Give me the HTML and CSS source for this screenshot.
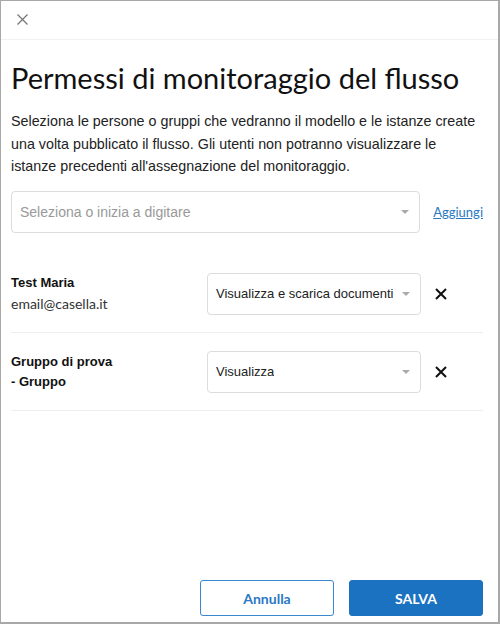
FILE: index.html
```html
<!DOCTYPE html>
<html lang="it">
<head>
    <meta charset="UTF-8">
    <meta name="viewport" content="width=device-width, initial-scale=1.0">
    <title>Permessi di monitoraggio del flusso</title>
    <link rel="stylesheet" href="styles.css">
</head>
<body>
    <div class="dialog">
        <!-- barra superiore con chiusura -->
        <div class="dialog-header">
            <button class="close-btn" aria-label="Chiudi">
                <svg width="11" height="11" viewBox="0 0 11 11"><path d="M0.5 0.5L10.5 10.5M10.5 0.5L0.5 10.5" stroke="#777" stroke-width="1.3" fill="none"/></svg>
            </button>
        </div>

        <div class="dialog-body">
            <h1>Permessi di monitoraggio del flusso</h1>
            <p class="intro">Seleziona le persone o gruppi che vedranno il modello e le istanze create una volta pubblicato il flusso. Gli utenti non potranno visualizzare le istanze precedenti all'assegnazione del monitoraggio.</p>

            <div class="add-row">
                <div class="select select-wide">
                    <span class="placeholder">Seleziona o inizia a digitare</span>
                    <span class="caret"></span>
                </div>
                <a href="#" class="add-link">Aggiungi</a>
            </div>

            <div class="member">
                <div class="member-info">
                    <div class="member-name">Test Maria</div>
                    <div class="member-mail">email@casella.it</div>
                </div>
                <div class="select select-role">
                    <span class="value">Visualizza e scarica documenti</span>
                    <span class="caret"></span>
                </div>
                <button class="remove-btn" aria-label="Rimuovi">
                    <svg width="12" height="12" viewBox="0 0 12 12"><path d="M1 1L11 11M11 1L1 11" stroke="#111" stroke-width="2" fill="none"/></svg>
                </button>
            </div>

            <div class="member">
                <div class="member-info">
                    <div class="member-name">Gruppo di prova - Gruppo</div>
                </div>
                <div class="select select-role">
                    <span class="value">Visualizza</span>
                    <span class="caret"></span>
                </div>
                <button class="remove-btn" aria-label="Rimuovi">
                    <svg width="12" height="12" viewBox="0 0 12 12"><path d="M1 1L11 11M11 1L1 11" stroke="#111" stroke-width="2" fill="none"/></svg>
                </button>
            </div>
        </div>

        <div class="dialog-footer">
            <button class="btn btn-outline">Annulla</button>
            <button class="btn btn-primary">SALVA</button>
        </div>
    </div>
</body>
</html>
```
FILE: styles.css
```css
body {
    margin: 0;
    font-family: "Liberation Sans", Arial, sans-serif;
    color: #222;
    background-color: #fff;
}
.dialog {
    box-sizing: border-box;
    width: 500px;
    height: 624px;
    border: 1px solid #a8a8a8;
    border-right-width: 2px;
    border-bottom-width: 2px;
    display: flex;
    flex-direction: column;
}
.dialog-header {
    height: 38px;
    border-bottom: 1px solid #f1f1f1;
    display: flex;
    align-items: center;
    padding-left: 16px;
}
.close-btn {
    background: none;
    border: none;
    padding: 0;
    display: flex;
    margin-top: -1px;
}
.dialog-body {
    flex: 1;
    padding: 0 15px 0 10px;
}
h1 {
    font-family: Lato, sans-serif;
    font-weight: normal;
    font-size: 29px;
    line-height: 34px;
    color: #111;
    margin: 21px 0 15px;
}
.intro {
    font-size: 14.3px;
    line-height: 22.5px;
    margin: 0 0 13px;
    color: #222;
}
.add-row {
    display: flex;
    align-items: center;
    margin-bottom: 22px;
}
.select {
    box-sizing: border-box;
    height: 42px;
    border: 1px solid #dcdcdc;
    border-radius: 4px;
    display: flex;
    align-items: center;
    justify-content: space-between;
    padding: 0 10px 0 8px;
    font-size: 14px;
    color: #222;
}
.select-wide {
    width: 410px;
}
.placeholder {
    color: #999;
}
.value {
    white-space: nowrap;
    overflow: hidden;
    font-size: 13px;
    margin-right: 5px;
}
.caret {
    flex-shrink: 0;
    width: 0;
    height: 0;
    border-left: 4px solid transparent;
    border-right: 4px solid transparent;
    border-top: 4px solid #aaa;
}
.add-link {
    margin-left: 13px;
    font-family: Lato, sans-serif;
    font-size: 13px;
    color: #2a78c5;
}
.member {
    display: flex;
    align-items: center;
    padding: 18px 0 17px;
    border-bottom: 1px solid #eee;
}
.member-info {
    width: 196px;
}
.member-name {
    font-weight: bold;
    font-size: 13px;
    line-height: 20px;
    max-width: 108px;
    color: #111;
}
.member-mail {
    font-family: Lato, sans-serif;
    font-size: 14px;
    line-height: 21px;
    color: #333;
}
.select-role {
    width: 214px;
}
.remove-btn {
    background: none;
    border: none;
    padding: 0;
    margin-left: 14px;
    display: flex;
}
.dialog-footer {
    display: flex;
    justify-content: flex-end;
    gap: 15px;
    padding: 0 15px 6px 0;
}
.btn {
    width: 134px;
    height: 36px;
    border-radius: 3px;
    font-family: Lato, sans-serif;
    font-weight: bold;
    font-size: 14px;
}
.btn-outline {
    background-color: #fff;
    border: 1px solid #3a88d2;
    color: #2a78c5;
}
.btn-primary {
    background-color: #1a72c1;
    border: 1px solid #1a72c1;
    color: #fff;
}
```
